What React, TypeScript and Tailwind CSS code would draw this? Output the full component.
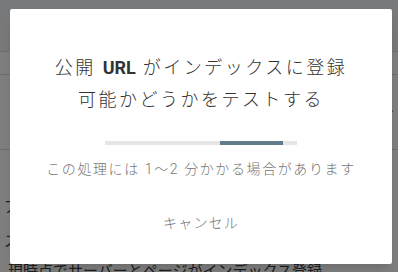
export default function App() {
  const font = { fontFamily: 'Roboto, "Noto Sans CJK JP", sans-serif' };

  return (
    <div className="relative w-[398px] h-[272px] overflow-hidden bg-white" style={font}>
      {/* page behind the scrim */}
      <div className="flex flex-col text-[15px] text-[#3c4043]">
        <div className="h-[52px] bg-[#f1f3f4] border-b border-[#dadce0] flex items-start justify-end pr-1 pt-2">
          <span className="text-[#1a73e8]">を</span>
        </div>
        <div className="h-[23px] border-b border-[#dadce0]"></div>
        <div className="h-[75px] border-b border-[#dadce0] flex items-center justify-between px-1">
          <span className="text-[#1a73e8]">・ジ</span>
          <span>ー</span>
        </div>
        <div className="h-[68px] flex items-end px-1">
          <span>ア</span>
        </div>
        <div className="h-[34px] flex items-end px-1">
          <span>ス</span>
        </div>
        <div className="pt-[8px] px-2 h-[30px] overflow-hidden">現時点でサーバーとページがインデックス登録</div>
      </div>

      {/* scrim */}
      <div className="absolute inset-0 bg-black/50"></div>

      {/* dialog */}
      <div className="absolute left-[10px] top-[9px] w-[382px] h-[255px] bg-white rounded-[2px] shadow-lg flex flex-col items-center">
        <div className="mt-[43px] text-[18px] leading-[32px] tracking-[2.5px] font-light text-[#333333] text-center">
          <div>
            公開 <span className="font-bold tracking-normal">URL</span> がインデックスに登録
          </div>
          <div>可能かどうかをテストする</div>
        </div>

        <div className="mt-[25px] w-[192px] h-[4px] bg-[#e6e6e6] flex">
          <div className="ml-[115px] w-[63px] h-full bg-[#607d8b]"></div>
        </div>

        <div className="mt-[14px] text-[14px] leading-[20px] tracking-[1.6px] font-light text-[#757575] whitespace-nowrap">
          この処理には 1〜2 分かかる場合があります
        </div>

        <button className="mt-[26px] h-[36px] px-2 text-[14px] tracking-[1.2px] font-light text-[#757575]">
          キャンセル
        </button>
      </div>
    </div>
  );
}
